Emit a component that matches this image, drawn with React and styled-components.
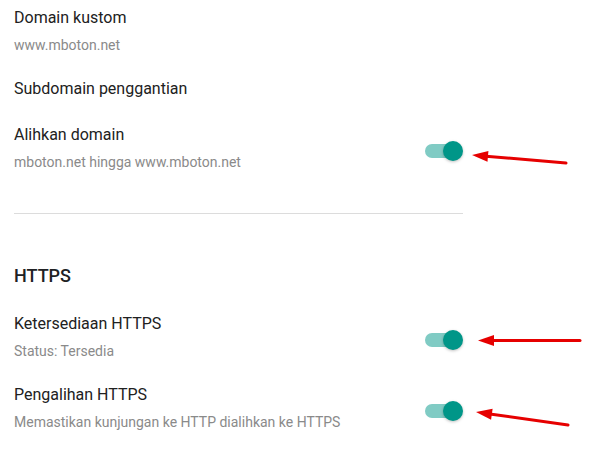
import React from 'react'
import styled, { createGlobalStyle } from 'styled-components'

const GlobalStyle = createGlobalStyle`
  html, body {
    margin: 0;
    padding: 0;
    background: #ffffff;
  }
  body {
    font-family: Roboto, "Noto Sans", Arial, sans-serif;
    -webkit-font-smoothing: antialiased;
  }
`;

const arrows = [
  { from: [566, 163], to: [472, 155] },
  { from: [580, 340.5], to: [478, 340.5] },
  { from: [568, 425], to: [476, 412] },
];

function Arrow({ from, to }) {
  const dx = to[0] - from[0];
  const dy = to[1] - from[1];
  const len = Math.hypot(dx, dy);
  const ux = dx / len;
  const uy = dy / len;
  const head = 16;
  const half = 5.5;
  const bx = to[0] - ux * head;
  const by = to[1] - uy * head;
  const pts = [
    `${to[0]},${to[1]}`,
    `${bx - uy * half},${by + ux * half}`,
    `${bx + uy * half},${by - ux * half}`,
  ].join(' ');
  return (
    <g>
      <line x1={from[0]} y1={from[1]} x2={bx + ux * 2} y2={by + uy * 2} stroke="#e60000" strokeWidth="3" strokeLinecap="round" />
      <polygon points={pts} fill="#e60000" />
    </g>
  );
}

export default function App() {
  return (
    <Page>
      <GlobalStyle />
      <Column>
        <List>
          <Item>
            <Text>
              <Title>Domain kustom</Title>
              <Sub>www.mboton.net</Sub>
            </Text>
          </Item>
          <Item>
            <Text>
              <Title>Subdomain penggantian</Title>
            </Text>
          </Item>
          <Item>
            <Text>
              <Title>Alihkan domain</Title>
              <Sub>mboton.net hingga www.mboton.net</Sub>
            </Text>
            <Switch on />
          </Item>
        </List>

        <Divider />

        <Heading>HTTPS</Heading>
        <List>
          <Item>
            <Text>
              <Title>Ketersediaan HTTPS</Title>
              <Sub>Status: Tersedia</Sub>
            </Text>
            <Switch on />
          </Item>
          <Item>
            <Text>
              <Title>Pengalihan HTTPS</Title>
              <Sub>Memastikan kunjungan ke HTTP dialihkan ke HTTPS</Sub>
            </Text>
            <Switch on />
          </Item>
        </List>
      </Column>

      <Overlay viewBox="0 0 592 462" width="592" height="462">
        {arrows.map((a, i) => (
          <Arrow key={i} from={a.from} to={a.to} />
        ))}
      </Overlay>
    </Page>
  )
}

function Switch({ on }) {
  return (
    <SwitchBox>
      <Track $on={on} />
      <Thumb $on={on} />
    </SwitchBox>
  );
}

const Page = styled.div`
  position: relative;
  width: 592px;
  height: 462px;
  overflow: hidden;
`;

const Column = styled.div`
  width: 449px;
  margin-left: 14px;
  padding-top: 6px;
  display: flex;
  flex-direction: column;
`;

const List = styled.div`
  display: flex;
  flex-direction: column;
  gap: 22px;
`;

const Item = styled.div`
  display: flex;
  align-items: center;
  justify-content: space-between;
`;

const Text = styled.div`
  display: flex;
  flex-direction: column;
  gap: 5px;
`;

const Title = styled.div`
  font-size: 16px;
  line-height: 24px;
  color: #212121;
`;

const Sub = styled.div`
  font-size: 14px;
  line-height: 20px;
  color: #8a8a8a;
`;

const Divider = styled.div`
  height: 1px;
  background: #dcdcdc;
  margin-top: 41px;
`;

const Heading = styled.h2`
  margin: 50px 0 24px;
  font-size: 18px;
  line-height: 24px;
  font-weight: 500;
  color: #202124;
`;

const SwitchBox = styled.div`
  position: relative;
  width: 38px;
  height: 20px;
  margin-top: 7px;
  flex-shrink: 0;
`;

const Track = styled.div`
  position: absolute;
  left: 0;
  top: 3px;
  width: 34px;
  height: 14px;
  border-radius: 7px;
  background: ${p => (p.$on ? '#80cbc4' : '#bdbdbd')};
`;

const Thumb = styled.div`
  position: absolute;
  top: 0;
  left: ${p => (p.$on ? '18px' : '0')};
  width: 20px;
  height: 20px;
  border-radius: 50%;
  background: ${p => (p.$on ? '#009688' : '#fafafa')};
  box-shadow: 0 1px 3px rgba(0, 0, 0, 0.25);
`;

const Overlay = styled.svg`
  position: absolute;
  left: 0;
  top: 0;
  pointer-events: none;
`;
